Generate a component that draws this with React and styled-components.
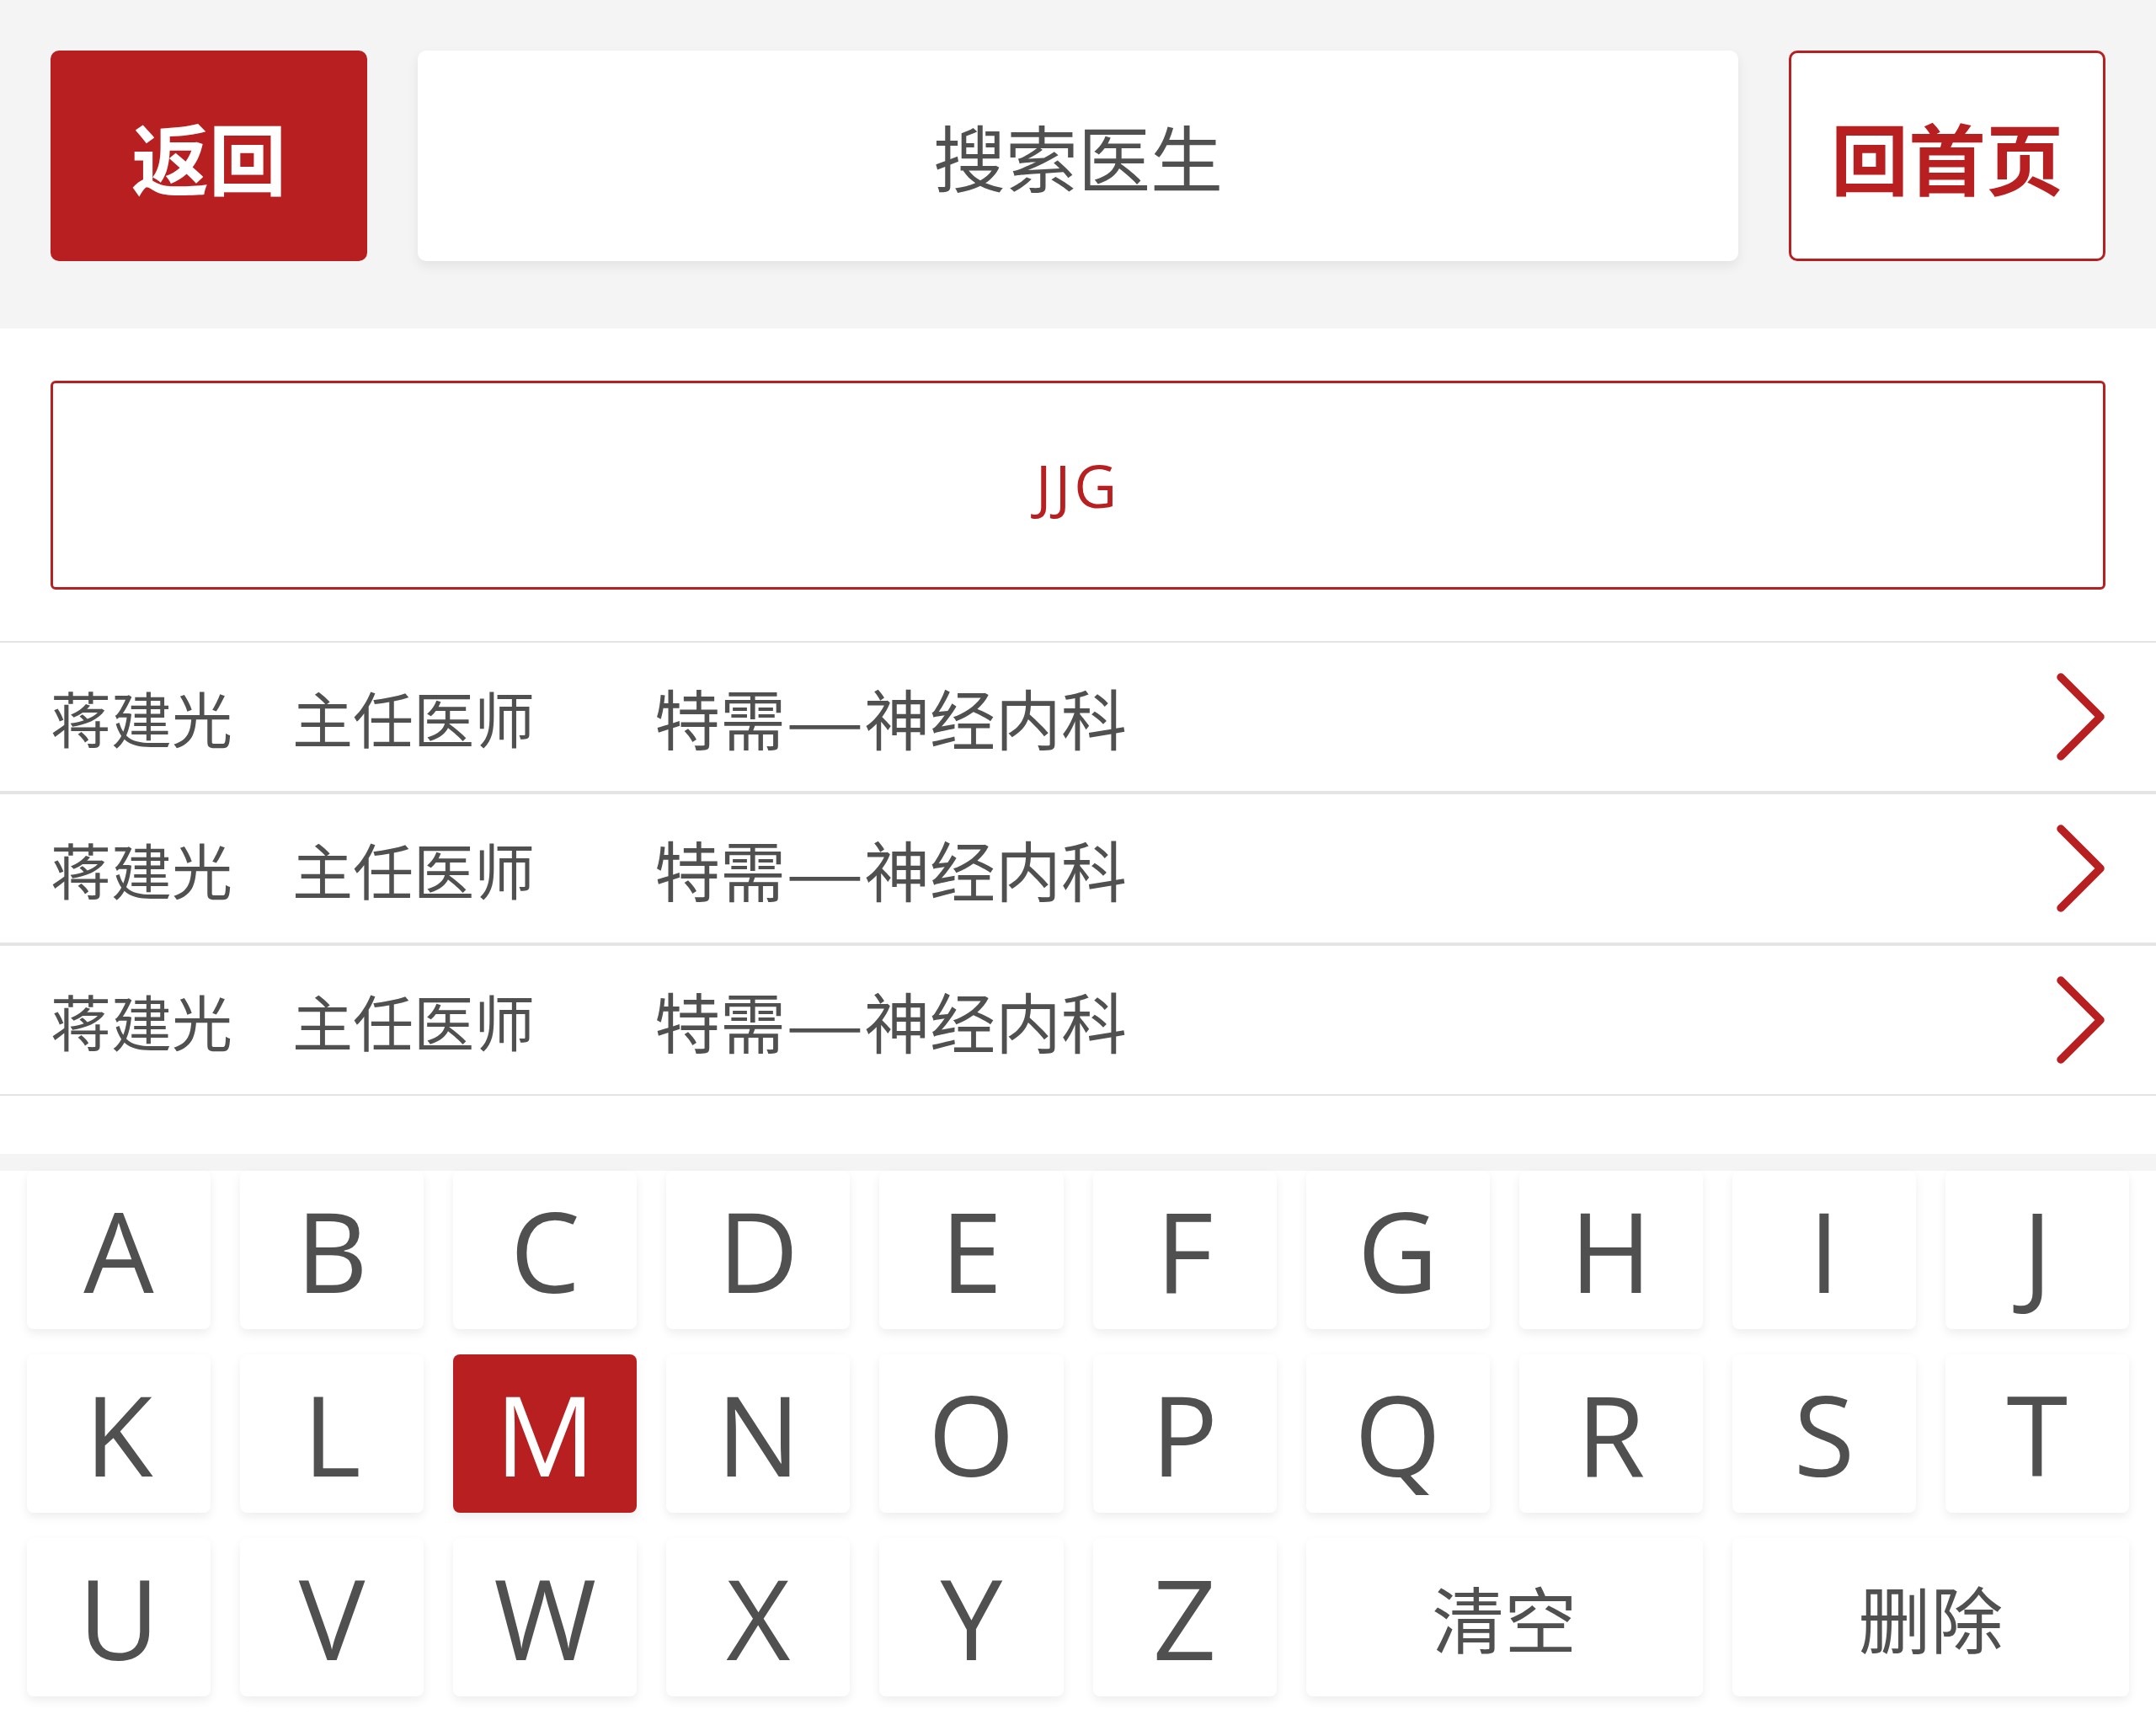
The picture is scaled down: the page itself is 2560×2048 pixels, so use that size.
import React from 'react';
import styled, { createGlobalStyle } from 'styled-components';

const RED = '#b81f21';
const TEXT = '#505050';

const GlobalStyle = createGlobalStyle`
    html, body {
        margin: 0;
        padding: 0;
        background: #ffffff;
    }
    body {
        font-family: "Open Sans", "Noto Sans CJK SC", sans-serif;
        color: ${TEXT};
    }
`;

const Page = styled.div`
    width: 2560px;
    background: #ffffff;
`;

const Header = styled.header`
    display: flex;
    flex-direction: row;
    align-items: stretch;
    gap: 60px;
    padding: 60px 60px 80px 60px;
    background-color: #f4f4f4;
`;

const HeaderButton = styled.button`
    flex: 0 0 376px;
    height: 250px;
    display: flex;
    align-items: center;
    justify-content: center;
    box-sizing: border-box;
    border-radius: 10px;
    font-family: "Noto Sans CJK SC", sans-serif;
    font-size: 92px;
    font-weight: 700;
    line-height: 1;
    padding: 0;
    cursor: pointer;
    color: ${(p) => (p.$filled ? '#ffffff' : RED)};
    background-color: ${(p) => (p.$filled ? RED : '#ffffff')};
    border: 3px solid ${RED};
`;

const SearchTitle = styled.div`
    flex: 1;
    height: 250px;
    display: flex;
    align-items: center;
    justify-content: center;
    background: #ffffff;
    border-radius: 10px;
    box-shadow: 0 6px 14px rgba(0, 0, 0, 0.07);
    font-family: "Noto Sans CJK SC", sans-serif;
    font-size: 86px;
    line-height: 1;
    color: ${TEXT};
`;

const InputWrap = styled.div`
    padding: 62px 60px 61px 60px;
`;

const CodeInput = styled.div`
    height: 248px;
    box-sizing: border-box;
    border: 3px solid ${RED};
    border-radius: 6px;
    display: flex;
    align-items: center;
    justify-content: center;
    font-family: "Open Sans", sans-serif;
    font-size: 70px;
    letter-spacing: 4px;
    color: ${RED};
`;

const List = styled.ul`
    list-style: none;
    margin: 0;
    padding: 0;
`;

const Row = styled.li`
    height: 180px;
    box-sizing: border-box;
    border-top: 2px solid #e4e4e4;
    border-bottom: 2px solid #e4e4e4;
    display: flex;
    align-items: center;
    padding: 0 60px 0 60px;
    font-family: "Noto Sans CJK SC", sans-serif;
    font-size: 72px;
    line-height: 1;
    color: ${TEXT};
`;

const Cell = styled.span`
    flex: 0 0 ${(p) => p.$width || 'auto'};
    white-space: nowrap;
`;

const Dept = styled.span`
    flex: 1;
    white-space: nowrap;
    font-size: 78px;
`;

const Dash = styled.span`
    display: inline-block;
    width: 93px;
    text-align: center;
    transform: scaleX(1.34);
`;

const Chevron = () => (
    <svg width="58" height="104" viewBox="0 0 58 104">
        <polyline
            points="5,5 52,52 5,99"
            fill="none"
            stroke={RED}
            strokeWidth="9.5"
            strokeLinecap="round"
            strokeLinejoin="round"
        />
    </svg>
);

const Keyboard = styled.div`
    margin-top: 69px;
    border-top: 20px solid #f4f4f4;
    padding: 0 32px 34px 32px;
    display: grid;
    grid-template-columns: repeat(10, 1fr);
    grid-auto-rows: 188px;
    column-gap: 35px;
    row-gap: 30px;
`;

const Key = styled.div`
    grid-column: span ${(p) => p.$span || 1};
    display: flex;
    align-items: center;
    justify-content: center;
    border-radius: 8px;
    background-color: ${(p) => (p.$active ? RED : '#ffffff')};
    color: ${(p) => (p.$active ? '#ffffff' : TEXT)};
    box-shadow: 0 5px 12px rgba(0, 0, 0, 0.07);
    font-family: ${(p) => (p.$cjk ? '"Noto Sans CJK SC", sans-serif' : '"Open Sans", sans-serif')};
    font-size: ${(p) => (p.$cjk ? '86px' : '132px')};
    line-height: 1;
    user-select: none;
`;

const doctors = [
    { name: '蒋建光', title: '主任医师', dept: ['特需', '神经内科'] },
    { name: '蒋建光', title: '主任医师', dept: ['特需', '神经内科'] },
    { name: '蒋建光', title: '主任医师', dept: ['特需', '神经内科'] },
];

const letters = 'ABCDEFGHIJKLMNOPQRSTUVWXYZ'.split('');

export default function App() {
    return (
        <Page>
            <GlobalStyle />
            <Header>
                <HeaderButton $filled>返回</HeaderButton>
                <SearchTitle>搜索医生</SearchTitle>
                <HeaderButton>回首页</HeaderButton>
            </Header>
            <InputWrap>
                <CodeInput>JJG</CodeInput>
            </InputWrap>
            <List>
                {doctors.map((d, i) => (
                    <Row key={i}>
                        <Cell $width="287px">{d.name}</Cell>
                        <Cell $width="430px">{d.title}</Cell>
                        <Dept>
                            {d.dept[0]}
                            <Dash>—</Dash>
                            {d.dept[1]}
                        </Dept>
                        <Chevron />
                    </Row>
                ))}
            </List>
            <Keyboard>
                {letters.map((l) => (
                    <Key key={l} $active={l === 'M'}>{l}</Key>
                ))}
                <Key $span={2} $cjk>清空</Key>
                <Key $span={2} $cjk>删除</Key>
            </Keyboard>
        </Page>
    );
}
